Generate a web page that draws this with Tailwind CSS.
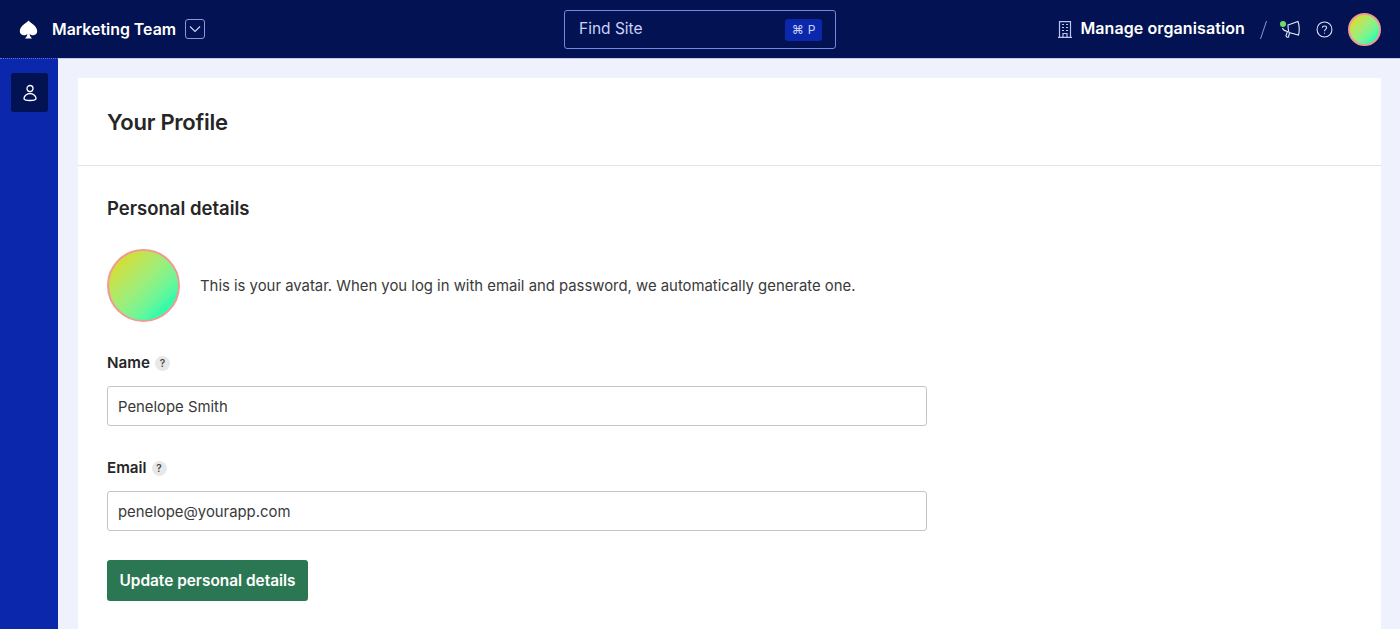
<!DOCTYPE html>
<html lang="en">
  <head>
    <meta charset="UTF-8" />
    <meta name="viewport" content="width=device-width, initial-scale=1.0" />
    <script src="https://cdn.jsdelivr.net/npm/@tailwindcss/browser@4"></script>
    <title>Your Profile</title>
  </head>
  <body class="h-[629px] overflow-hidden flex flex-col bg-[#eff1fc] font-['Inter',sans-serif] antialiased text-[#262626]">
    <!-- Top bar -->
    <header class="relative h-[58px] shrink-0 bg-[#021252] text-white flex items-center justify-between pl-[19px] pr-[19px]">
      <div class="flex items-center">
        <svg class="w-[19px] h-[19px] mt-[1px]" viewBox="0 0 19 19" fill="#fff">
          <path d="M9.5 0.5C8.5 2.5 0.8 5.5 0.8 11.2C0.8 13.8 2.9 15.3 5 15.3C6.4 15.3 7.6 14.7 8.4 13.7C8.3 15.5 7.5 16.8 6 18.5H13C11.5 16.8 10.7 15.5 10.6 13.7C11.4 14.7 12.6 15.3 14 15.3C16.1 15.3 18.2 13.8 18.2 11.2C18.2 5.5 10.5 2.5 9.5 0.5Z" />
        </svg>
        <span class="ml-[14px] text-[15.9px] font-semibold mt-[2px]">Marketing Team</span>
        <span class="ml-[9px] w-[20px] h-[20px] rounded-[3px] border border-[#8b98dc] flex items-center justify-center">
          <svg class="w-[14px] h-[14px]" viewBox="0 0 14 14" fill="none" stroke="#d5daf5" stroke-width="1.1"><path d="M2 4.5L7 9.5L12 4.5" /></svg>
        </span>
      </div>

      <div class="absolute left-[564px] top-[10px] w-[272px] h-[39px] rounded-[3px] border border-[#7686de] flex items-center justify-between pl-[14px] pr-[13px]">
        <span class="text-[15.5px] text-[#ccd3f4] -mt-[1px]">Find Site</span>
        <span class="w-[37px] h-[22px] rounded-[3px] bg-[#0b28ad] text-[12px] text-[#ccd3f4] flex items-center justify-center gap-[4px]"><span>⌘</span><span>P</span></span>
      </div>

      <div class="flex items-center">
        <svg class="w-[14px] h-[17px] mt-[1px]" viewBox="0 0 14 17" fill="none" stroke="#bcc5ef" stroke-width="1.2">
          <path d="M1.5 16V0.6H12.5V16M0 16.4H14M5 16V12.5H9V16M4 3.5H6M8 3.5H10M4 6.5H6M8 6.5H10M4 9.5H6M8 9.5H10" />
        </svg>
        <span class="ml-[8px] text-[16px] font-semibold tracking-[0.1px] -mt-[3px]">Manage organisation</span>
        <svg class="ml-[15px] w-[7px] h-[20px] mt-[2px]" viewBox="0 0 7 20" fill="none" stroke="#8b98dc" stroke-width="1"><path d="M6.5 1L0.5 19" /></svg>
        <span class="relative ml-[14px] w-[20px] h-[20px] mt-[1px]">
          <svg class="w-[20px] h-[20px]" viewBox="0 0 20 20" fill="none" stroke="#e4e8fa" stroke-width="1.1">
            <path d="M7 5L17 1.5C18.5 6 18.5 11 17.5 15L8 12.5C7 10 7 7.5 7 5Z" />
            <path d="M1.5 8C2 10 4 11 6.5 11.5L5 15.5C5 17 6.5 17.5 7.5 17L8.5 13" />
          </svg>
          <span class="absolute -left-[1px] top-[1px] w-[6px] h-[6px] rounded-full bg-[#6fdc6a]"></span>
        </span>
        <svg class="ml-[15px] w-[17px] h-[17px] mt-[1px]" viewBox="0 0 18 18" fill="none" stroke="#e4e8fa" stroke-width="1.1">
          <circle cx="9" cy="9" r="7.9" />
          <path d="M6.8 7.2C6.8 4.6 11.2 4.6 11.2 7.2C11.2 8.9 9 8.9 9 10.8" />
          <path d="M9 12.4V13.4" />
        </svg>
        <span class="ml-[15px] w-[33px] h-[33px] rounded-full border-2 border-[#f09a94] bg-linear-to-br from-[#d8dc1a] from-10% to-[#38fba8] to-80%"></span>
      </div>
    </header>

    <div class="flex-1 flex min-h-0 border-t border-[#c5cbe6]">
      <!-- Side rail -->
      <aside class="w-[58px] shrink-0 bg-[#0b28ad] pt-[14px] pl-[11px] -mt-[1px] border-t border-dotted border-[#5a70d8]">
        <span class="w-[37px] h-[39px] rounded-[3px] bg-[#021252] flex items-center justify-center">
          <svg class="w-[16px] h-[18px]" viewBox="0 0 16 18" fill="none" stroke="#fff" stroke-width="1.3">
            <circle cx="8" cy="4.5" r="3" />
            <path d="M8 9.5C5 9.5 2 12 2 14.5C2 16 4 16.5 8 16.5C12 16.5 14 16 14 14.5C14 12 11 9.5 8 9.5Z" />
          </svg>
        </span>
      </aside>

      <main class="flex-1 pt-[19px] pl-[20px] pr-[19px] min-w-0">
        <div class="bg-white h-full">
          <div class="h-[88px] border-b border-[#e4e4e4] pl-[29px] flex items-center">
            <h1 class="text-[22px] font-semibold tracking-[-0.25px] mt-[1px]">Your Profile</h1>
          </div>

          <div class="pl-[29px] pt-[30px]">
            <h2 class="text-[18.5px] leading-[24px] font-semibold">Personal details</h2>

            <div class="mt-[29px] flex items-center">
              <span class="w-[73px] h-[73px] rounded-full border-2 border-[#f09a94] bg-linear-to-br from-[#d8dc1a] from-10% to-[#38fba8] to-80%"></span>
              <p class="ml-[20px] pt-[2px] text-[14.87px] text-[#3a3a3a]">This is your avatar. When you log in with email and password, we automatically generate one.</p>
            </div>

            <label class="mt-[31px] flex items-center h-[20px]">
              <span class="text-[15.2px] font-semibold">Name</span>
              <span class="ml-[5px] w-[15px] h-[15px] rounded-full bg-[#e8e8e8] text-[10px] font-semibold text-[#444] flex items-center justify-center">?</span>
            </label>
            <div class="mt-[13px] w-[820px] h-[40px] rounded-[3px] border border-[#c4c4c4] pl-[10px] pt-[2px] flex items-center text-[14.87px] text-[#3a3a3a]">Penelope Smith</div>

            <label class="mt-[32px] flex items-center h-[20px]">
              <span class="text-[15.2px] font-semibold">Email</span>
              <span class="ml-[5px] w-[15px] h-[15px] rounded-full bg-[#e8e8e8] text-[10px] font-semibold text-[#444] flex items-center justify-center">?</span>
            </label>
            <div class="mt-[13px] w-[820px] h-[40px] rounded-[3px] border border-[#c4c4c4] pl-[10px] pt-[2px] flex items-center text-[14.87px] text-[#3a3a3a]">penelope@yourapp.com</div>

            <button class="mt-[29px] w-[201px] h-[41px] rounded-[3px] bg-[#2c7753] text-white text-[15.4px] font-semibold">Update personal details</button>
          </div>
        </div>
      </main>
    </div>
  </body>
</html>
